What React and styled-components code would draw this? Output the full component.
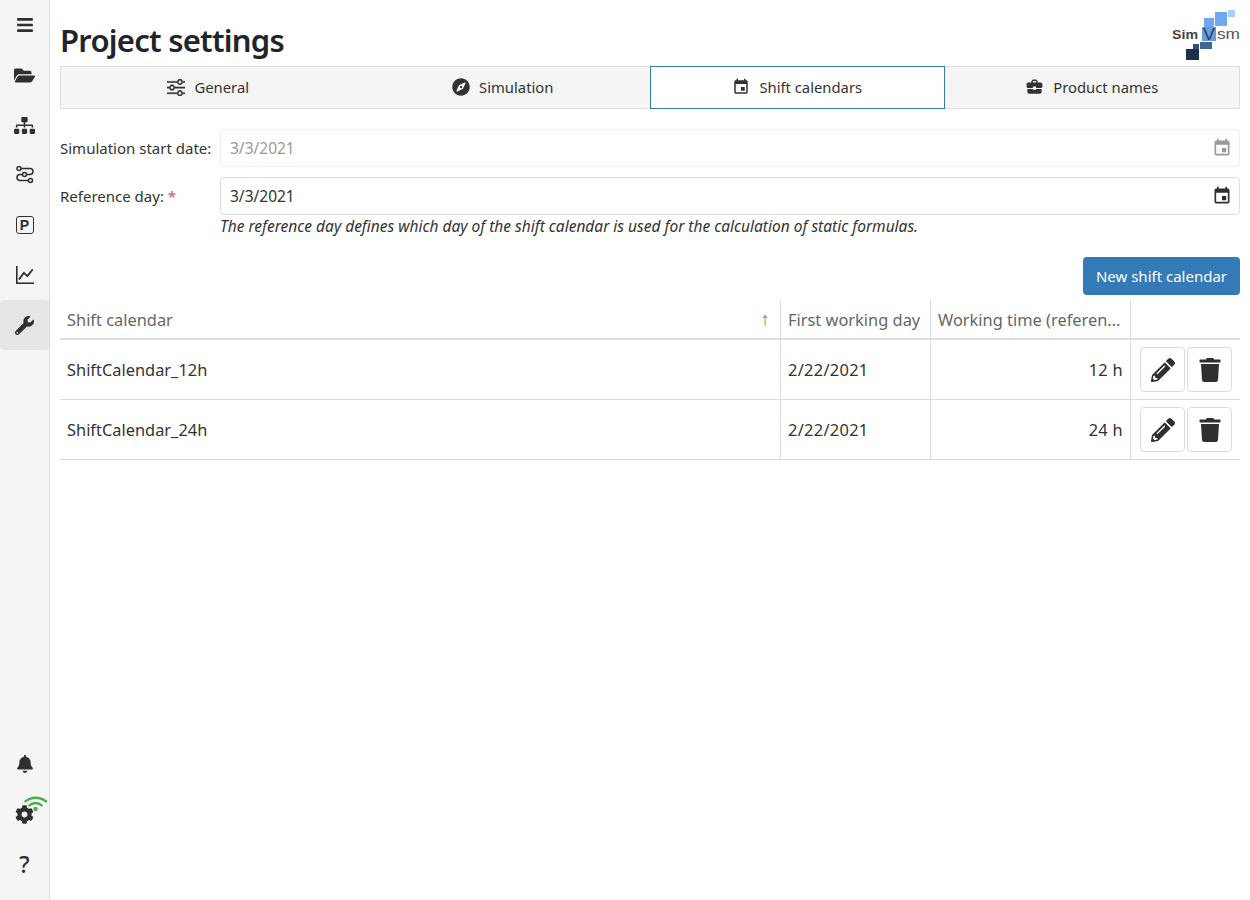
import React from 'react';
import styled, { createGlobalStyle } from 'styled-components';
import {
  FaBars, FaFolderOpen, FaSitemap, FaWrench, FaBell, FaCog,
  FaPencilAlt, FaTrash, FaCompass,
} from 'react-icons/fa';
import { BsSliders, BsGraphUp } from 'react-icons/bs';
import { MdEvent, MdBusinessCenter } from 'react-icons/md';

const GlobalStyle = createGlobalStyle`
  html, body {
    margin: 0;
    padding: 0;
    background: #fff;
    font-family: "Noto Sans", "Open Sans", sans-serif;
    color: #333;
  }
`;

const Page = styled.div`
  display: flex;
  height: 900px;
  width: 1250px;
  overflow: hidden;
`;

const Sidebar = styled.nav`
  width: 50px;
  flex: none;
  display: flex;
  flex-direction: column;
  justify-content: space-between;
  padding-bottom: 11px;
  box-sizing: border-box;
  background: #f5f5f5;
  border-right: 1px solid #ddd;
`;

const SideGroup = styled.div`
  display: flex;
  flex-direction: column;
`;

const SideItem = styled.div`
  position: relative;
  height: 50px;
  display: flex;
  align-items: center;
  justify-content: center;
  font-size: 18px;
  color: #2f2f2f;
  border-radius: 4px;
  background: ${props => (props.$active ? '#e6e6e6' : 'transparent')};
`;

const ParkingBadge = styled.span`
  width: 18px;
  height: 18px;
  box-sizing: border-box;
  display: flex;
  align-items: center;
  justify-content: center;
  border: 1.5px solid #2f2f2f;
  border-radius: 3px;
  font-family: "Liberation Sans", sans-serif;
  font-size: 14px;
  font-weight: 700;
  line-height: 1;
`;

const HelpMark = styled.span`
  font-size: 23px;
  font-weight: 500;
  line-height: 1;
`;

const Signal = styled.svg`
  position: absolute;
  left: 24px;
  top: 6px;
`;

const Main = styled.main`
  flex: 1;
  padding: 0 10px;
  min-width: 0;
`;

const Header = styled.header`
  height: 66px;
  display: flex;
  align-items: flex-start;
  justify-content: space-between;
`;

const Title = styled.h1`
  margin: 19px 0 0;
  font-size: 31px;
  line-height: 42px;
  font-weight: 600;
  color: #212529;
  letter-spacing: -0.75px;
`;

const LogoMark = styled.svg`
  display: block;
`;

const Tabs = styled.div`
  display: grid;
  grid-template-columns: repeat(4, 1fr);
  height: 43px;
  box-sizing: border-box;
  background: #f5f5f5;
  border: 1px solid #ddd;
`;

const Tab = styled.div`
  display: flex;
  align-items: center;
  justify-content: center;
  gap: 9px;
  margin: -1px 0 -1px;
  padding-bottom: 2px;
  font-size: 14.8px;
  color: #333;
  box-sizing: border-box;
  ${props => props.$active && 'background: #fff; border: 1px solid #337ab7;'}
`;

const Form = styled.div`
  display: flex;
  flex-direction: column;
  gap: 10px;
  margin-top: 20px;
`;

const Row = styled.div`
  display: flex;
  align-items: center;
`;

const Label = styled.label`
  width: 160px;
  flex: none;
  font-size: 15px;
  color: #333;
`;

const Required = styled.span`
  color: #d9534f;
`;

const DateInput = styled.div`
  flex: 1;
  height: 38px;
  box-sizing: border-box;
  display: flex;
  align-items: center;
  justify-content: space-between;
  padding: 0 7px 0 9px;
  font-size: 15.5px;
  border: 1px solid ${props => (props.$disabled ? '#eee' : '#ddd')};
  border-radius: 4px;
  color: ${props => (props.$disabled ? '#999' : '#333')};
  svg {
    color: ${props => (props.$disabled ? '#999' : '#2f2f2f')};
  }
`;

const Hint = styled.p`
  margin: 2px 0 0 160px;
  font-size: 15.5px;
  line-height: 18px;
  font-style: italic;
  color: #333;
`;

const Actions = styled.div`
  display: flex;
  justify-content: flex-end;
  margin-top: 22px;
`;

const PrimaryButton = styled.button`
  height: 38px;
  width: 157px;
  border: 0;
  border-radius: 4px;
  background: #337ab7;
  color: #fff;
  font: inherit;
  font-size: 15px;
`;

const Table = styled.div`
  margin-top: 5px;
  display: grid;
  grid-template-columns: 720px 150px 200px 110px;
`;

const HeadCell = styled.div`
  height: 40px;
  box-sizing: border-box;
  display: flex;
  align-items: center;
  justify-content: space-between;
  padding: 0 7px;
  font-size: 16.4px;
  color: #666;
  border-bottom: 2px solid #ddd;
  border-left: ${props => (props.$first ? '0' : '1px solid #ddd')};
  white-space: nowrap;
  overflow: hidden;
`;

const SortArrow = styled.span`
  color: #a9824a;
  font-size: 19px;
  margin-right: 3px;
`;

const Cell = styled.div`
  height: 60px;
  box-sizing: border-box;
  display: flex;
  align-items: center;
  justify-content: ${props => (props.$right ? 'flex-end' : 'flex-start')};
  gap: 2px;
  padding: 0 7px;
  font-size: 16.4px;
  letter-spacing: ${props => (props.$numeric ? '0.3px' : '0')};
  color: #333;
  border-bottom: 1px solid #ddd;
  border-left: ${props => (props.$first ? '0' : '1px solid #ddd')};
`;

const ActionCell = styled(Cell)`
  padding-right: 8px;
`;

const IconButton = styled.button`
  width: 45px;
  height: 45px;
  padding: 0;
  display: flex;
  align-items: center;
  justify-content: center;
  background: #fff;
  border: 1px solid #ddd;
  border-radius: 4px;
  font-size: 24px;
  color: #2f2f2f;
`;

const FlowIcon = () => (
  <svg width="18" height="18" viewBox="0 0 18 18" fill="none" stroke="#2f2f2f" strokeWidth="1.5">
    <path d="M5 2.5 H14 A3 3 0 0 1 14 8.5 H11" />
    <path d="M6 8.5 H4 A3 3 0 0 0 4 14.5 H12" />
    <circle cx="3" cy="2.5" r="2" />
    <circle cx="8.5" cy="8.5" r="2" />
    <circle cx="14.5" cy="14.5" r="2" />
  </svg>
);

const Logo = () => (
  <LogoMark width="70" height="62" viewBox="0 0 70 62">
    <rect x="58" y="10" width="7" height="7" fill="#a9d0fa" />
    <rect x="45" y="12" width="12" height="14" fill="#6fa8f0" />
    <rect x="34" y="18" width="10" height="9" fill="#6fa8f0" />
    <rect x="32" y="27" width="14" height="14" fill="#6b9bd8" />
    <rect x="30" y="42" width="12" height="7" fill="#3f6897" />
    <rect x="23" y="44" width="6" height="5" fill="#33507a" />
    <rect x="16" y="49" width="13" height="11" fill="#1f304d" />
    <text x="2" y="39" fontFamily="Liberation Sans, sans-serif" fontWeight="700" fontSize="13" textLength="26" lengthAdjust="spacingAndGlyphs" fill="#444">Sim</text>
    <text x="33" y="40" fontFamily="Liberation Sans, sans-serif" fontSize="16" textLength="12" lengthAdjust="spacingAndGlyphs" fill="#27405f">V</text>
    <text x="47" y="39" fontFamily="Liberation Sans, sans-serif" fontSize="14" textLength="23" lengthAdjust="spacingAndGlyphs" fill="#555">sm</text>
  </LogoMark>
);

const calendars = [
  { name: 'ShiftCalendar_12h', start: '2/22/2021', time: '12 h' },
  { name: 'ShiftCalendar_24h', start: '2/22/2021', time: '24 h' },
];

export default function App() {
  return (
    <Page>
      <GlobalStyle />
      <Sidebar>
        <SideGroup>
          <SideItem><FaBars /></SideItem>
          <SideItem><FaFolderOpen size={21} /></SideItem>
          <SideItem><FaSitemap size={21} /></SideItem>
          <SideItem><FlowIcon /></SideItem>
          <SideItem><ParkingBadge>P</ParkingBadge></SideItem>
          <SideItem><BsGraphUp size={18} stroke="currentColor" strokeWidth={0.8} /></SideItem>
          <SideItem $active><FaWrench size={19} /></SideItem>
        </SideGroup>
        <SideGroup>
          <SideItem><FaBell /></SideItem>
          <SideItem>
            <FaCog size={19} />
            <Signal width="24" height="18" viewBox="0 0 24 18" fill="none">
              <path d="M0.5 7 Q11.5 -1.5 23 7" stroke="#4cae4f" strokeWidth="2.2" />
              <path d="M4.5 11 Q11.5 5 18.5 11" stroke="#4cae4f" strokeWidth="2.2" />
              <circle cx="11.5" cy="14" r="2.2" fill="#4cae4f" />
            </Signal>
          </SideItem>
          <SideItem><HelpMark>?</HelpMark></SideItem>
        </SideGroup>
      </Sidebar>
      <Main>
        <Header>
          <Title>Project settings</Title>
          <Logo />
        </Header>
        <Tabs>
          <Tab><BsSliders size={18} stroke="currentColor" strokeWidth={0.5} />General</Tab>
          <Tab><FaCompass size={18} />Simulation</Tab>
          <Tab $active><MdEvent size={18} />Shift calendars</Tab>
          <Tab><MdBusinessCenter size={19} />Product names</Tab>
        </Tabs>
        <Form>
          <Row>
            <Label>Simulation start date:</Label>
            <DateInput $disabled>3/3/2021<MdEvent size={20} /></DateInput>
          </Row>
          <div>
            <Row>
              <Label>Reference day: <Required>*</Required></Label>
              <DateInput>3/3/2021<MdEvent size={20} /></DateInput>
            </Row>
            <Hint>The reference day defines which day of the shift calendar is used for the calculation of static formulas.</Hint>
          </div>
        </Form>
        <Actions>
          <PrimaryButton>New shift calendar</PrimaryButton>
        </Actions>
        <Table>
          <HeadCell $first>Shift calendar<SortArrow>↑</SortArrow></HeadCell>
          <HeadCell>First working day</HeadCell>
          <HeadCell>Working time (referen...</HeadCell>
          <HeadCell />
          {calendars.map(row => (
            <React.Fragment key={row.name}>
              <Cell $first>{row.name}</Cell>
              <Cell $numeric>{row.start}</Cell>
              <Cell $right $numeric>{row.time}</Cell>
              <ActionCell $right>
                <IconButton><FaPencilAlt /></IconButton>
                <IconButton><FaTrash /></IconButton>
              </ActionCell>
            </React.Fragment>
          ))}
        </Table>
      </Main>
    </Page>
  );
}
